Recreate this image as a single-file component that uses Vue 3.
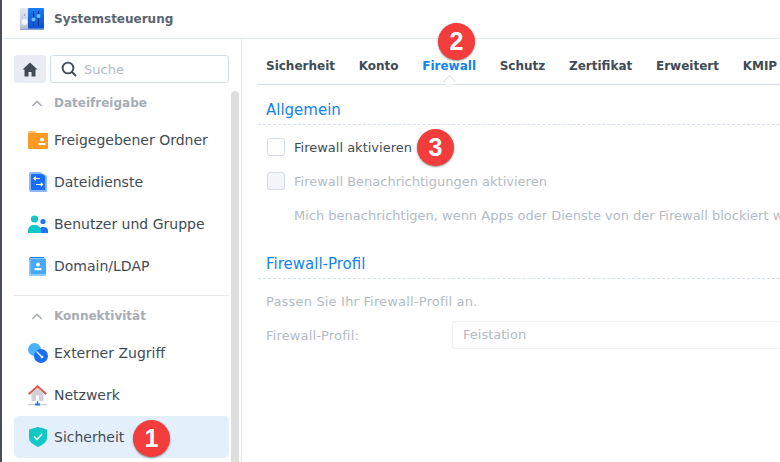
<template>
  <div class="window">
    <header class="titlebar">
      <svg class="app-icon" width="24" height="22" viewBox="0 0 24 22">
        <defs>
          <linearGradient id="panelGrey" x1="0" y1="0" x2="0" y2="1">
            <stop offset="0" stop-color="#e4e8f2" />
            <stop offset="1" stop-color="#b9c0d2" />
          </linearGradient>
          <linearGradient id="panelBlue" x1="0" y1="0" x2="0" y2="1">
            <stop offset="0" stop-color="#1a7df0" />
            <stop offset="1" stop-color="#0d4fd0" />
          </linearGradient>
        </defs>
        <rect x="0" y="0" width="10" height="21" rx="1.5" fill="url(#panelGrey)" />
        <rect x="8" y="0" width="16" height="21" rx="1" fill="url(#panelBlue)" />
        <rect x="0" y="20.500" width="24" height="1.500" fill="#8fa6d8" />
        <circle cx="4.500" cy="14" r="3" fill="#f4f5f9" />
        <circle cx="4.500" cy="7" r="0.700" fill="#8089a0" />
        <path d="M13.500 3v15M18.500 3v15" stroke="#0b2f88" stroke-width="1" />
        <circle cx="13.500" cy="11.500" r="1.900" fill="#6fc0ff" />
        <circle cx="18.500" cy="8" r="1.900" fill="#6fc0ff" />
      </svg>
      <span class="app-title">Systemsteuerung</span>
    </header>

    <div class="body">
      <aside class="sidebar">
        <div class="search-row">
          <button class="home-btn">
            <svg width="16" height="15" viewBox="0 0 16 15">
              <path d="M8 0.5 0.5 7.500H2.500V14.500H6.500V10H9.500V14.500H13.500V7.500H15.500Z" fill="#414b55" />
            </svg>
          </button>
          <div class="search">
            <svg width="16" height="16" viewBox="0 0 16 16" fill="none" stroke="#414b55" stroke-width="1.900">
              <circle cx="7" cy="7" r="5.400" />
              <path d="M11 11 15 15" />
            </svg>
            <span>Suche</span>
          </div>
        </div>

        <div class="nav-wrap">
          <nav class="nav">
            <template v-for="group in groups" :key="group.title">
              <div class="group-head">
                <svg width="12" height="7" viewBox="0 0 14 8" fill="none" stroke="#a6adb6" stroke-width="1.800">
                  <path d="M1.500 7 7 1.500 12.500 7" />
                </svg>
                <span>{{ group.title }}</span>
              </div>
              <div
                v-for="item in group.items"
                :key="item.label"
                class="nav-item"
                :class="{ active: item.active }"
              >
                <span class="nav-icon" v-html="item.icon"></span>
                <span>{{ item.label }}</span>
              </div>
              <div v-if="group.first" class="divider"></div>
            </template>
          </nav>
          <div class="scrollbar"></div>
        </div>
      </aside>

      <main class="content">
        <div class="tabs">
          <span v-for="tab in tabs" :key="tab" class="tab" :class="{ current: tab === 'Firewall' }">{{ tab }}</span>
        </div>

        <section class="section">
          <h2>Allgemein</h2>
          <label class="check-row">
            <span class="box"></span>
            <span>Firewall aktivieren</span>
          </label>
          <label class="check-row off second">
            <span class="box"></span>
            <span>Firewall Benachrichtigungen aktivieren</span>
          </label>
          <p class="hint">Mich benachrichtigen, wenn Apps oder Dienste von der Firewall blockiert werden.</p>
        </section>

        <section class="section profile">
          <h2>Firewall-Profil</h2>
          <p class="intro">Passen Sie Ihr Firewall-Profil an.</p>
          <div class="field">
            <span class="field-label">Firewall-Profil:</span>
            <div class="select">Feistation</div>
          </div>
        </section>
      </main>
    </div>

    <span class="badge one">1</span>
    <span class="badge two">2</span>
    <span class="badge three">3</span>
  </div>
</template>

<script setup>
const tabs = ['Sicherheit', 'Konto', 'Firewall', 'Schutz', 'Zertifikat', 'Erweitert', 'KMIP']

// small product icons
const folderIcon = `<svg width="20" height="18" viewBox="0 0 20 18">
  <path d="M0 1.500A1.500 1.500 0 0 1 1.500 0H7l2 2.500H0Z" fill="#fdc36f"/>
  <rect x="0" y="2" width="20" height="16" rx="1" fill="#fb9a22"/>
  <circle cx="14" cy="8.500" r="2" fill="#fff"/>
  <rect x="10.500" y="12" width="7" height="2" fill="#fff"/>
</svg>`
const filesIcon = `<svg width="18" height="20" viewBox="0 0 18 20">
  <path d="M0 2a2 2 0 0 1 2-2h9l7 4v16H2a2 2 0 0 1-2-2Z" fill="#8ab8f8"/>
  <path d="M2 3a1 1 0 0 1 1-1h10l3 2v14H3a1 1 0 0 1-1-1Z" fill="#1a6dfb"/>
  <path d="M11 6.500H5M6.800 4.800 5 6.500l1.800 1.700M7 12.500h6.500M11.800 10.800l1.800 1.700-1.800 1.700" fill="none" stroke="#fff" stroke-width="1.200"/>
</svg>`
const usersIcon = `<svg width="20" height="18" viewBox="0 0 20 18">
  <circle cx="6.500" cy="4" r="3.600" fill="#13c6c8"/>
  <circle cx="15" cy="6.500" r="2.600" fill="#1f74f5"/>
  <path d="M12 18h8v-2.500a4 4 0 0 0-4-3.500h-2a5 5 0 0 0-2 1Z" fill="#1f74f5"/>
  <path d="M0 18v-3a5.500 5.500 0 0 1 5.500-5h2a5.500 5.500 0 0 1 5.500 5v3Z" fill="#13c6c8"/>
</svg>`
const domainIcon = `<svg width="17" height="19" viewBox="0 0 17 19">
  <path d="M0 2a2 2 0 0 1 2-2h13v3H0Z" fill="#1f74f5"/>
  <rect x="0" y="1" width="17" height="18" rx="1.500" fill="#8ccaff"/>
  <rect x="1.500" y="2" width="15.500" height="15" rx="1" fill="#46a8ff"/>
  <circle cx="9" cy="7.500" r="1.900" fill="#fff"/>
  <rect x="5.500" y="11" width="7" height="2.200" rx="0.500" fill="#fff"/>
</svg>`
const accessIcon = `<svg width="20" height="20" viewBox="0 0 20 20">
  <circle cx="6.500" cy="6.500" r="6.500" fill="#4db0ff"/>
  <circle cx="13" cy="13" r="7" fill="#1a6ef5"/>
  <path d="M8.500 8.500 14 14" stroke="#fff" stroke-width="1.300"/>
  <circle cx="14" cy="14" r="1.300" fill="#fff"/>
</svg>`
const networkIcon = `<svg width="19" height="21" viewBox="0 0 19 21">
  <path d="M3.500 8.500 9.500 3l6 5.500V16h-12Z" fill="#cfd3d8"/>
  <path d="M.7 9.300 9.500 1.300l8.800 8" fill="none" stroke="#df5650" stroke-width="2"/>
  <rect x="8" y="10.500" width="3" height="5.500" fill="#fff"/>
  <rect x="0" y="19" width="19" height="1.300" fill="#cfd3d8"/>
  <path d="M9.500 16v3" stroke="#1f74f5" stroke-width="1.300"/>
  <rect x="7" y="18.500" width="5" height="2" fill="#1f74f5"/>
</svg>`
const shieldIcon = `<svg width="18" height="20" viewBox="0 0 18 20">
  <path d="M9 0 18 2.500V11c0 4-4.500 7-9 9C4.500 18 0 15 0 11V2.500Z" fill="#11c8c4"/>
  <path d="M5 9.500 8 12.500 13 7" fill="none" stroke="#fff" stroke-width="1.500"/>
</svg>`

const groups = [
  {
    title: 'Dateifreigabe',
    first: true,
    items: [
      { label: 'Freigegebener Ordner', icon: folderIcon },
      { label: 'Dateidienste', icon: filesIcon },
      { label: 'Benutzer und Gruppe', icon: usersIcon },
      { label: 'Domain/LDAP', icon: domainIcon },
    ],
  },
  {
    title: 'Konnektivität',
    items: [
      { label: 'Externer Zugriff', icon: accessIcon },
      { label: 'Netzwerk', icon: networkIcon },
      { label: 'Sicherheit', icon: shieldIcon, active: true },
    ],
  },
]
</script>

<style>
html, body {
  margin: 0;
  background: #fff;
  overflow: hidden;
}
</style>

<style scoped>
.window {
  position: relative;
  width: 780px;
  height: 462px;
  box-sizing: border-box;
  overflow: hidden;
  background: #fff;
  border-left: 2px solid #4a4f55;
  font-family: "DejaVu Sans", Verdana, sans-serif;
  font-size: 13px;
  color: #414b55;
}

.titlebar {
  height: 38px;
  display: flex;
  align-items: center;
  padding-left: 18px;
  gap: 10px;
  border-bottom: 1px solid #e3e9f0;
}

.app-title {
  font-size: 12px;
  font-weight: 700;
  color: #5a6470;
}

.body {
  display: flex;
  height: 423px;
}

.sidebar {
  width: 239px;
  flex: none;
  border-right: 1px solid #e3e9f0;
}

.search-row {
  display: flex;
  gap: 4px;
  padding: 16px 12px 0 12px;
}

.home-btn {
  width: 32px;
  height: 28px;
  padding: 0;
  border: 0;
  border-radius: 3px;
  background: #e9edf3;
  display: flex;
  align-items: center;
  justify-content: center;
}

.search {
  flex: 1;
  height: 28px;
  box-sizing: border-box;
  border: 1px solid #d3dde8;
  border-radius: 3px;
  display: flex;
  align-items: center;
  gap: 7px;
  padding-left: 10px;
  color: #b4bbc3;
}

.nav-wrap {
  display: flex;
  gap: 2px;
  margin-top: 8px;
}

.nav {
  width: 215px;
  margin-left: 12px;
  flex: none;
}

.group-head {
  height: 24px;
  margin-bottom: 4px;
  display: flex;
  align-items: center;
  gap: 11px;
  padding-left: 17px;
  font-size: 12px;
  font-weight: 700;
  color: #a6adb6;
}

.nav-item {
  height: 42px;
  display: flex;
  align-items: center;
  gap: 5px;
  padding-left: 12px;
  border-radius: 5px;
  font-size: 14px;
}

.nav-item.active {
  background: #e3f0fc;
}

.nav-icon {
  width: 23px;
  height: 22px;
  display: flex;
  align-items: center;
  justify-content: center;
}

.divider {
  height: 1px;
  background: #e8eaed;
  margin: 8px 0 8px;
}

.scrollbar {
  width: 8px;
  height: 380px;
  border-radius: 4px 4px 0 0;
  background: #dedede;
}

.content {
  flex: 1;
  min-width: 0;
  padding-left: 16px;
}

.tabs {
  height: 46px;
  box-sizing: border-box;
  display: flex;
  align-items: center;
  gap: 23.7px;
  padding: 8px 0 0 8px;
  border-bottom: 1px solid #d5dfe9;
  font-size: 12px;
  font-weight: 700;
  white-space: nowrap;
}

.tab {
  position: relative;
  color: #414b55;
}

.tab.current {
  color: #1283f2;
}

/* little notch under the active tab */
.tab.current::after {
  content: "";
  position: absolute;
  left: 50%;
  bottom: -13px;
  width: 8px;
  height: 8px;
  margin-left: -4px;
  transform: rotate(45deg);
  background: #fff;
  border-left: 1px solid #d5dfe9;
  border-top: 1px solid #d5dfe9;
}

.section h2 {
  margin: 0;
  height: 40px;
  box-sizing: border-box;
  padding: 15px 0 0 8px;
  line-height: 20px;
  font-size: 15px;
  font-weight: 400;
  color: #1283f2;
  border-bottom: 1px dashed #d5dfe9;
}

.check-row {
  display: flex;
  align-items: center;
  gap: 9px;
  height: 18px;
  margin: 13px 0 0 9px;
  white-space: nowrap;
}

.check-row.second {
  margin-top: 16px;
}

.box {
  width: 18px;
  height: 18px;
  box-sizing: border-box;
  border: 1px solid #d3dde8;
  border-radius: 3px;
  background: #fff;
}

.off {
  color: #b4bbc3;
}

.off .box {
  background: #f3f5f9;
}

.hint {
  margin: 17px 0 0 36px;
  line-height: 18px;
  white-space: nowrap;
  color: #b4bbc3;
}

.profile {
  margin-top: 14px;
}

.intro {
  margin: 14px 0 0 8px;
  line-height: 18px;
  letter-spacing: 0.18px;
  color: #b4bbc3;
}

.field {
  display: flex;
  align-items: center;
  margin: 10px 0 0 8px;
  color: #b4bbc3;
}

.field-label {
  width: 186px;
  flex: none;
  letter-spacing: 0.15px;
}

.select {
  flex: 1;
  height: 28px;
  box-sizing: border-box;
  border: 1px solid #eef0f3;
  border-right: 0;
  border-radius: 3px 0 0 3px;
  line-height: 26px;
  padding-left: 10px;
}

.badge {
  position: absolute;
  width: 37px;
  height: 37px;
  border-radius: 50%;
  background: #f33c3c;
  box-shadow: 0 1px 2px rgba(0, 0, 0, 0.45);
  color: #fff;
  font-family: "Liberation Sans", Arial, sans-serif;
  font-size: 25px;
  font-weight: 700;
  line-height: 37px;
  text-align: center;
}

.one { left: 131px; top: 420px; }
.two { left: 436px; top: 23px; }
.three { left: 415px; top: 129px; }
</style>
